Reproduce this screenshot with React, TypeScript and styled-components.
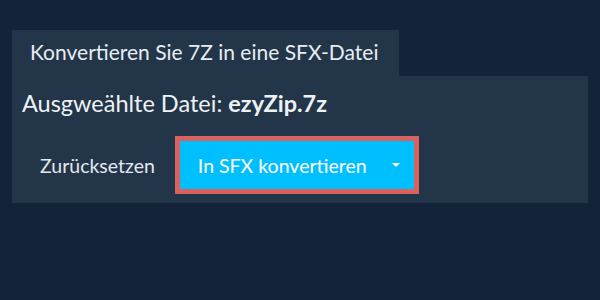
import styled, { createGlobalStyle } from "styled-components";

const Global = createGlobalStyle`
  html, body {
    margin: 0;
    padding: 0;
    background: #12233a;
    font-family: Lato, "Open Sans", sans-serif;
  }
`;

const Page = styled.div`
  width: 600px;
  height: 300px;
  padding: 30px 12px 0 12px;
  box-sizing: border-box;
`;

const Tab = styled.div`
  display: inline-block;
  background: #233649;
  color: #e8edf2;
  font-size: 21px;
  line-height: 44px;
  height: 46px;
  padding: 0 21px 0 18px;
`;

const Panel = styled.div`
  background: #233649;
  padding: 12px 10px 10px 10px;
  height: 127px;
  box-sizing: border-box;
`;

const FileName = styled.div`
  color: #eef2f5;
  font-size: 23.5px;
  line-height: 30px;

  b {
    font-weight: 700;
  }
`;

const Row = styled.div`
  display: flex;
  align-items: center;
  margin-top: 18px;
  gap: 20px;
`;

const Reset = styled.button`
  background: none;
  border: none;
  color: #e3e8ee;
  font-family: inherit;
  font-size: 19.5px;
  padding: 0 0 0 18px;
`;

const Convert = styled.button`
  display: flex;
  align-items: center;
  justify-content: space-between;
  width: 244px;
  height: 58px;
  box-sizing: border-box;
  background: #00bfff;
  border: 5px solid #d9625e;
  color: #ffffff;
  font-family: inherit;
  font-size: 19.5px;
  padding: 0 14px 0 18px;
`;

const Caret = styled.span`
  width: 0;
  height: 0;
  border-left: 4px solid transparent;
  border-right: 4px solid transparent;
  border-top: 4px solid #ffffff;
`;

export default function App() {
  return (
    <>
      <Global />
      <Page>
        <Tab>Konvertieren Sie 7Z in eine SFX-Datei</Tab>
        <Panel>
          <FileName>
            Ausgweählte Datei: <b>ezyZip.7z</b>
          </FileName>
          <Row>
            <Reset>Zurücksetzen</Reset>
            <Convert>
              In SFX konvertieren
              <Caret />
            </Convert>
          </Row>
        </Panel>
      </Page>
    </>
  );
}
